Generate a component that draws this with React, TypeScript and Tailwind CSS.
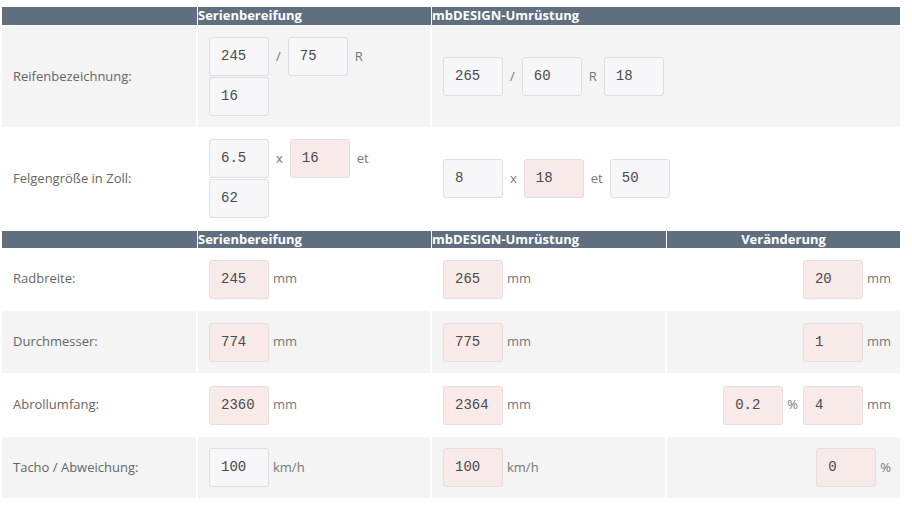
import React from "react";

const LABEL = "font-['Open_Sans',sans-serif] text-[13px] text-[#666]";

function Inp({ v, pink }: { v: string; pink?: boolean }) {
  return (
    <div
      className={
        "w-[60px] h-[39px] shrink-0 rounded-[3px] border flex items-center pl-[11px] font-['Liberation_Mono',monospace] text-[14px] text-[#4a4a4a] " +
        (pink ? "bg-[#f9eaea] border-[#e8dcdc]" : "bg-[#f7f7f9] border-[#dedede]")
      }
    >
      {v}
    </div>
  );
}

function Sep({ t }: { t: string }) {
  return <span className={LABEL + " px-[7px] text-[#777]"}>{t}</span>;
}

function Unit({ t }: { t: string }) {
  return <span className={LABEL + " pl-[4px] text-[#777]"}>{t}</span>;
}

function HeadCell({ t, first, center, h }: { t?: string; first?: boolean; center?: boolean; h: string }) {
  return (
    <div
      className={
        h +
        " flex items-center font-['Open_Sans',sans-serif] font-bold text-[13px] text-white " +
        (first ? "" : "shadow-[-1px_0_0_#ffffff] ") +
        (center ? "justify-center" : "")
      }
    >
      {t}
    </div>
  );
}

export default function App() {
  const gray = "bg-[#f4f4f4]";
  const rows = [
    {
      l: "Radbreite:",
      bg: "",
      h: "h-[62px]",
      a: <><Inp v="245" pink /><Unit t="mm" /></>,
      b: <><Inp v="265" pink /><Unit t="mm" /></>,
      c: <><Inp v="20" pink /><Unit t="mm" /></>,
    },
    {
      l: "Durchmesser:",
      bg: gray,
      h: "h-[62px]",
      a: <><Inp v="774" pink /><Unit t="mm" /></>,
      b: <><Inp v="775" pink /><Unit t="mm" /></>,
      c: <><Inp v="1" pink /><Unit t="mm" /></>,
    },
    {
      l: "Abrollumfang:",
      bg: "",
      h: "h-[62px]",
      a: <><Inp v="2360" pink /><Unit t="mm" /></>,
      b: <><Inp v="2364" pink /><Unit t="mm" /></>,
      c: <><Inp v="0.2" pink /><Unit t="%" /><span className="w-[5px]" /><Inp v="4" pink /><Unit t="mm" /></>,
    },
    {
      l: "Tacho / Abweichung:",
      bg: gray,
      h: "h-[61px]",
      a: <><Inp v="100" /><Unit t="km/h" /></>,
      b: <><Inp v="100" pink /><Unit t="km/h" /></>,
      c: <><Inp v="0" pink /><Unit t="%" /></>,
    },
  ];
  return (
    <div className="w-[912px] h-[508px] bg-white pt-[7px] pl-[2px] overflow-hidden">
      {/* Top table */}
      <div className="grid grid-cols-[194px_232px_468px] gap-x-[2px] bg-[#5f6f7f] w-[898px]">
        <HeadCell h="h-[18px]" first />
        <HeadCell h="h-[18px]" t="Serienbereifung" />
        <HeadCell h="h-[18px]" t="mbDESIGN-Umrüstung" />
      </div>
      <div className="grid grid-cols-[194px_232px_468px] gap-x-[2px] mt-[1px] h-[101px]">
        <div className={gray + " flex items-center pl-[11px] " + LABEL}>Reifenbezeichnung:</div>
        <div className={gray + " flex flex-wrap items-center content-center gap-y-[1px] px-[11px]"}>
          <Inp v="245" />
          <Sep t="/" />
          <Inp v="75" />
          <Sep t="R" />
          <Inp v="16" />
        </div>
        <div className={gray + " flex items-center px-[11px]"}>
          <Inp v="265" />
          <Sep t="/" />
          <Inp v="60" />
          <Sep t="R" />
          <Inp v="18" />
        </div>
      </div>
      <div className="grid grid-cols-[194px_232px_468px] gap-x-[2px] mt-[1px] h-[101px]">
        <div className={"flex items-center pl-[11px] " + LABEL}>Felgengröße in Zoll:</div>
        <div className="flex flex-wrap items-center content-center gap-y-[1px] px-[11px]">
          <Inp v="6.5" />
          <Sep t="x" />
          <Inp v="16" pink />
          <Sep t="et" />
          <Inp v="62" />
        </div>
        <div className="flex items-center px-[11px]">
          <Inp v="8" />
          <Sep t="x" />
          <Inp v="18" pink />
          <Sep t="et" />
          <Inp v="50" />
        </div>
      </div>

      {/* Bottom table */}
      <div className="grid grid-cols-[194px_232px_233px_233px] gap-x-[2px] bg-[#5f6f7f] w-[898px] mt-[2px]">
        <HeadCell h="h-[17px]" first />
        <HeadCell h="h-[17px]" t="Serienbereifung" />
        <HeadCell h="h-[17px]" t="mbDESIGN-Umrüstung" />
        <HeadCell h="h-[17px]" t="Veränderung" center />
      </div>
      <div className="flex flex-col gap-y-[1px]">
        {rows.map((r, i) => (
          <div key={i} className={"grid grid-cols-[194px_232px_233px_233px] gap-x-[2px] " + r.h}>
            <div className={r.bg + " flex items-center pl-[11px] " + LABEL}>{r.l}</div>
            <div className={r.bg + " flex items-center px-[11px]"}>{r.a}</div>
            <div className={r.bg + " flex items-center px-[11px]"}>{r.b}</div>
            <div className={r.bg + " flex items-center justify-end pr-[9px]"}>{r.c}</div>
          </div>
        ))}
      </div>
    </div>
  );
}
